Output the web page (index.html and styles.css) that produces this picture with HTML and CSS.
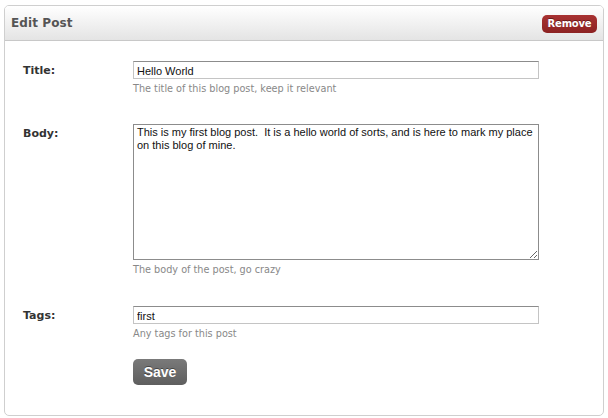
FILE: index.html
```html
<!DOCTYPE html>
<html>
<head>
<meta charset="utf-8">
<link rel="stylesheet" href="styles.css">
</head>
<body>
<div class="panel">
  <div class="panel-header">
    <h2 class="panel-title">Edit Post</h2>
    <button class="btn-remove">Remove</button>
  </div>
  <form class="panel-body">
    <div class="row">
      <label class="label">Title:</label>
      <div class="field">
        <input class="text-input" type="text" value="Hello World">
        <div class="hint">The title of this blog post, keep it relevant</div>
      </div>
    </div>
    <div class="row row-body">
      <label class="label">Body:</label>
      <div class="field">
        <textarea class="textarea">This is my first blog post.  It is a hello world of sorts, and is here to mark my place on this blog of mine.</textarea>
        <div class="hint">The body of the post, go crazy</div>
      </div>
    </div>
    <div class="row row-last">
      <label class="label">Tags:</label>
      <div class="field">
        <input class="text-input" type="text" value="first">
        <div class="hint">Any tags for this post</div>
      </div>
    </div>
    <div class="row">
      <div class="label"></div>
      <div class="field">
        <button class="btn-save" type="button">Save</button>
      </div>
    </div>
  </form>
</div>
</body>
</html>
```

FILE: styles.css
```css
html, body {
  margin: 0;
  padding: 0;
  background: #fff;
}
body {
  padding: 5px 4px 0 4px;
  font-family: "DejaVu Sans", "Liberation Sans", sans-serif;
}
.panel {
  width: 598px;
  height: 409px;
  border: 1px solid #cfcfcf;
  border-radius: 5px;
  box-sizing: content-box;
  overflow: hidden;
  display: flex;
  flex-direction: column;
}
.panel-header {
  flex: none;
  height: 34px;
  border-bottom: 1px solid #c8c8c8;
  background: linear-gradient(#ffffff, #e4e4e4);
  display: flex;
  align-items: center;
  justify-content: space-between;
  padding: 0 6px 0 6px;
}
.panel-title {
  margin: 0;
  font-size: 12px;
  font-weight: bold;
  color: #555;
  letter-spacing: 0.1px;
}
.btn-remove {
  margin: 0;
  margin-top: 1px;
  height: 18px;
  width: 55px;
  padding: 0;
  border: none;
  border-radius: 5px;
  background: linear-gradient(#a83232, #8c2222);
  color: #fff;
  font-family: "DejaVu Sans", sans-serif;
  font-weight: bold;
  font-size: 10px;
  letter-spacing: -0.2px;
  text-shadow: 0 -1px 0 rgba(0,0,0,0.4);
}
.panel-body {
  flex: 1;
  margin: 0;
  padding: 20px 0 0 18px;
  display: flex;
  flex-direction: column;
}
.row {
  display: flex;
  margin-bottom: 28px;
}
.row-body {
  margin-bottom: 29px;
}
.row-last {
  margin-bottom: 18px;
}
.label {
  width: 110px;
  flex: none;
  padding-top: 3px;
  font-size: 11px;
  font-weight: bold;
  color: #333;
}
.field {
  display: flex;
  flex-direction: column;
}
.text-input {
  box-sizing: border-box;
  width: 406px;
  height: 18px;
  margin: 0;
  padding: 1px 3px 0;
  border: 1px solid #c4c4c4;
  border-top-color: #8c8c8c;
  font-family: "Liberation Sans", Arial, sans-serif;
  font-size: 11px;
  color: #111;
  outline: none;
}
.textarea {
  box-sizing: border-box;
  width: 406px;
  height: 136px;
  margin: 0;
  padding: 1px 3px;
  border: 1px solid #8c8c8c;
  font-family: "Liberation Sans", Arial, sans-serif;
  font-size: 11px;
  line-height: 13px;
  color: #111;
  resize: both;
  outline: none;
}
.hint {
  margin-top: 3px;
  font-size: 9.7px;
  line-height: 14px;
  color: #888;
}
.btn-save {
  margin: 0;
  width: 54px;
  height: 26px;
  padding: 0;
  border: none;
  border-radius: 5px;
  background: linear-gradient(#7a7a7a, #5e5e5e);
  color: #fff;
  font-family: "Liberation Sans", Arial, sans-serif;
  font-weight: bold;
  font-size: 14px;
  text-shadow: 0 -1px 0 rgba(0,0,0,0.4);
}
```
